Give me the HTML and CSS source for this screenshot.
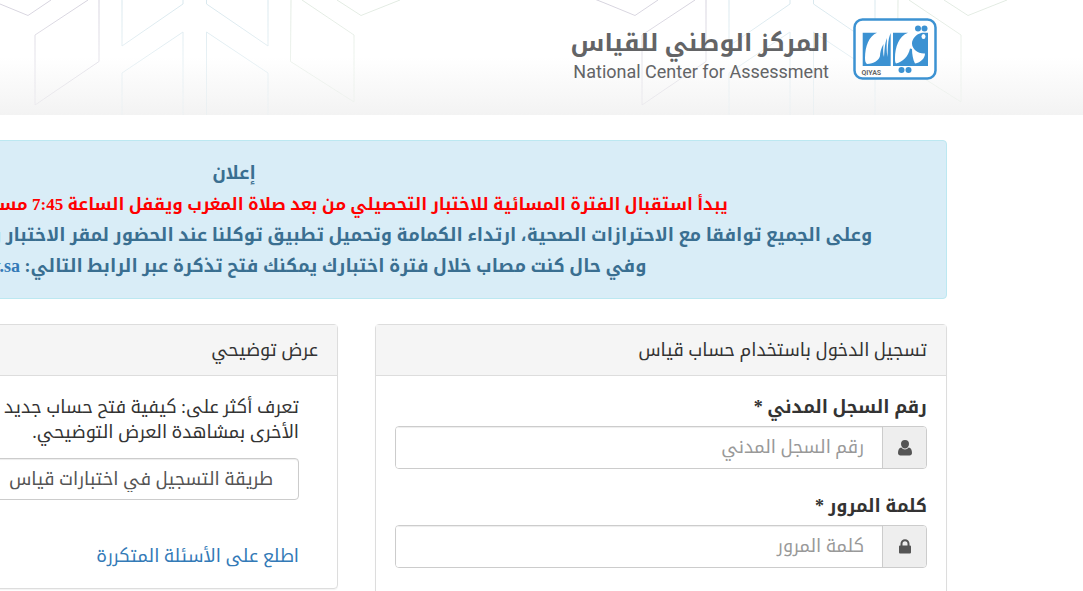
FILE: index.html
```html
<!DOCTYPE html>
<html lang="ar" dir="rtl">
<head>
  <meta charset="UTF-8">
  <meta name="viewport" content="width=device-width, initial-scale=1.0">
  <title>المركز الوطني للقياس</title>
  <link rel="stylesheet" href="styles.css">
</head>
<body>
  <header class="header">
    <svg class="header-pattern" aria-hidden="true">
      <defs>
        <linearGradient id="fade" x1="0" y1="0" x2="0" y2="115" gradientUnits="userSpaceOnUse">
          <stop offset="0" stop-color="#fff"/>
          <stop offset="1" stop-color="#444"/>
        </linearGradient>
        <mask id="fadeMask" maskUnits="userSpaceOnUse" x="-30" y="0" width="640" height="115">
          <rect x="-30" width="640" height="115" fill="url(#fade)"/>
        </mask>
        <pattern id="cubes" width="607" height="115" patternUnits="userSpaceOnUse">
          <g fill="none" mask="url(#fadeMask)">
            <path stroke="#d6d3de" d="M0 4L28 15.500L51 0M592 -2L607 4M88 0L35 35V105L99 61.500V0"/>
            <path stroke="#d9e8ee" d="M122 0V46L183 4V0M206.500 0V4L268 46V0M122 115V73L183 32V115M206.500 115V32L268 73V115"/>
            <path stroke="#e2ebe2" d="M291 0L290.500 61.500L354 102V35L302 0M337 0L361 15.500L400 0"/>
          </g>
        </pattern>
      </defs>
      <rect width="100%" height="115" fill="url(#cubes)"/>
    </svg>
    <div class="container brand">
      <svg class="logo" width="84" height="62" viewBox="0 0 84 62" role="img" aria-label="قياس">
        <rect x="1.500" y="1.500" width="81" height="59" rx="8" fill="#fff" stroke="#3c92d2" stroke-width="2.500"/>
        <g fill="#3c92d2">
          <path d="M9.700 14.700H24C16 18 12 28 12 40C12 43 12.500 45 14 46C21 46 26 42 27 38C27 35 28 30 30.500 26C30 31 30 36 31 39C31.500 34 31.500 26 34 20C33.500 27 33.500 34 34.500 39C35 31 34.500 22 37.700 15V48H9.700Z"/>
          <path d="M40 14.700H55C46 18 42 29 42 40C42 43 42 44 43 45.500C50 44 55.500 38 57 30.500L59 31C59 36 60 42 62 45.500C68 44.500 72 40 72 35.500C65 36 59 31 59 25.500C59 21 63 16 69 14.700H75V48H40Z"/>
          <circle cx="65" cy="10.500" r="3"/>
          <circle cx="71.500" cy="10.500" r="3"/>
          <circle cx="48.500" cy="52" r="3"/>
          <circle cx="55.500" cy="52" r="3"/>
        </g>
        <ellipse cx="70.500" cy="18.500" rx="2" ry="2.500" fill="#fff"/>
        <text class="logo-name" x="8.500" y="57" direction="ltr">QIYAS</text>
      </svg>
      <div class="brand-text">
        <div class="brand-ar">المركز الوطني للقياس</div>
        <div class="brand-en">National Center for Assessment</div>
      </div>
    </div>
  </header>

  <main class="container">
    <div class="alert">
      <p>إعلان</p>
      <p class="alert-red">يبدأ استقبال الفترة المسائية للاختبار التحصيلي من بعد صلاة المغرب ويقفل الساعة 7:45 مساءً ولن يسمح له بالدخول بعد ذلك</p>
      <p>وعلى الجميع توافقا مع الاحترازات الصحية، ارتداء الكمامة وتحميل تطبيق توكلنا عند الحضور لمقر الاختبار والالتزام بالتباعد الجسدي إحضار الهوية الوطنية</p>
      <p>وفي حال كنت مصاب خلال فترة اختبارك يمكنك فتح تذكرة عبر الرابط التالي: <a href="#">https://etickets.etec.gov.sa</a></p>
    </div>

    <div class="columns">
      <section class="panel">
        <h2 class="panel-heading">تسجيل الدخول باستخدام حساب قياس</h2>
        <form class="panel-body">
          <div class="form-group">
            <label for="civilId">رقم السجل المدني *</label>
            <div class="input-group">
              <span class="addon">
                <svg width="14" height="16" viewBox="0 0 14 16" aria-hidden="true"><path fill="#555" d="M7 0a4 4 0 0 1 4 4c0 2.500-1.800 4.500-4 4.500S3 6.500 3 4a4 4 0 0 1 4-4zM3.300 7.500C4.300 8.800 5.600 9.500 7 9.500s2.700-.7 3.700-2C13 7.800 14 10 14 13c0 1.500-1 2.500-2.400 2.500H2.400C1 15.500 0 14.500 0 13c0-3 1-5.200 3.300-5.500z"/></svg>
              </span>
              <input type="text" id="civilId" placeholder="رقم السجل المدني">
            </div>
          </div>
          <div class="form-group">
            <label for="password">كلمة المرور *</label>
            <div class="input-group">
              <span class="addon">
                <svg width="12" height="15" viewBox="0 0 12 15" aria-hidden="true"><path fill="#555" fill-rule="evenodd" d="M1.500 6.500V4.800a4.500 4.500 0 0 1 9 0v1.700h.6c.5 0 .9.400.9.900v6.200c0 .5-.4.900-.9.900H.9c-.5 0-.9-.4-.9-.9V7.400c0-.5.400-.9.900-.9zm2 0h5V4.800a2.500 2.500 0 0 0-5 0z"/></svg>
              </span>
              <input type="password" id="password" placeholder="كلمة المرور">
            </div>
          </div>
        </form>
      </section>

      <section class="panel panel-demo">
        <h2 class="panel-heading">عرض توضيحي</h2>
        <div class="panel-body demo-body">
          <p>تعرف أكثر على: كيفية فتح حساب جديد<br>الأخرى بمشاهدة العرض التوضيحي.</p>
          <select class="demo-select" aria-label="عرض توضيحي">
            <option>طريقة التسجيل في اختبارات قياس</option>
          </select>
          <a class="faq" href="#">اطلع على الأسئلة المتكررة</a>
        </div>
      </section>
    </div>
  </main>
</body>
</html>
```
FILE: styles.css
```css
* {
  box-sizing: border-box;
}
html {
  overflow-x: hidden;
}
body {
  margin: 0;
  font-family: "Liberation Serif", "Noto Kufi Arabic", "DejaVu Sans", serif;
  font-size: 18px;
  line-height: 25px;
  color: #333;
  background: #fff;
}
p, h2 {
  margin: 0;
}
a {
  color: #337ab7;
  text-decoration: none;
}
.container {
  min-width: 1426px;
  margin-right: 136px;
}
.header {
  position: relative;
  height: 115px;
  background: linear-gradient(#fff 50%, #f3f3f3);
}
.header-pattern {
  position: absolute;
  top: 0;
  left: 0;
  width: 100%;
  height: 115px;
}
.brand {
  position: relative;
  display: flex;
  gap: 24px;
  padding: 18px 10px 0 0;
}
.logo-name {
  font: bold 7px "Roboto", sans-serif;
  fill: #666;
}
.brand-text {
  padding-top: 4px;
  color: #636466;
}
.brand-ar {
  font-size: 24px;
  font-weight: bold;
  line-height: 42px;
}
.brand-en {
  font-family: "Roboto", sans-serif;
  font-size: 18px;
  line-height: 16px;
  direction: ltr;
  text-align: right;
}

.alert {
  margin-top: 25px;
  padding: 17px 16px 16px;
  border: 1px solid #bce8f1;
  border-radius: 4px;
  background: #d9edf7;
  color: #3a6f91;
  font-weight: bold;
  line-height: 31px;
  text-align: center;
  white-space: nowrap;
}
.alert-red {
  color: #f00;
  font-size: 17px;
}

.columns {
  display: flex;
  align-items: flex-start;
  gap: 37px;
  margin-top: 25px;
}
.panel {
  width: 572px;
  border: 1px solid #ddd;
  border-radius: 4px;
  box-shadow: 0 1px 1px rgba(0,0,0,0.05);
}
.panel-demo {
  flex: 1;
}
.panel-heading {
  padding: 13px 19px 12px;
  border-bottom: 1px solid #ddd;
  background: #f5f5f5;
  font-size: 18px;
  font-weight: normal;
}
.panel-body {
  padding: 19px;
}
.form-group {
  margin-bottom: 24px;
}
.form-group label {
  display: block;
  margin-bottom: 6px;
  font-weight: bold;
}
.input-group {
  display: flex;
  height: 43px;
  border: 1px solid #ccc;
  border-radius: 4px;
  overflow: hidden;
}
.form-group + .form-group {
  padding-top: 1px;
}
.addon {
  display: flex;
  flex: none;
  align-items: center;
  justify-content: center;
  width: 44px;
  border-left: 1px solid #ccc;
  background: #eee;
}
.input-group input {
  flex: 1;
  padding: 0 18px;
  border: 0;
  background: #fff;
  box-shadow: inset 0 1px 1px rgba(0,0,0,0.075);
  font: inherit;
}
.input-group input::placeholder {
  color: #999;
}
.demo-body {
  padding: 19px 38px;
}
.demo-select {
  display: block;
  width: 100%;
  height: 42px;
  margin-top: 13px;
  padding: 0 25px;
  border: 1px solid #ccc;
  border-radius: 4px;
  background: #fff;
  box-shadow: inset 0 1px 1px rgba(0,0,0,0.075);
  color: #555;
  font: inherit;
  appearance: none;
}
.faq {
  display: block;
  margin-top: 44px;
}
```
